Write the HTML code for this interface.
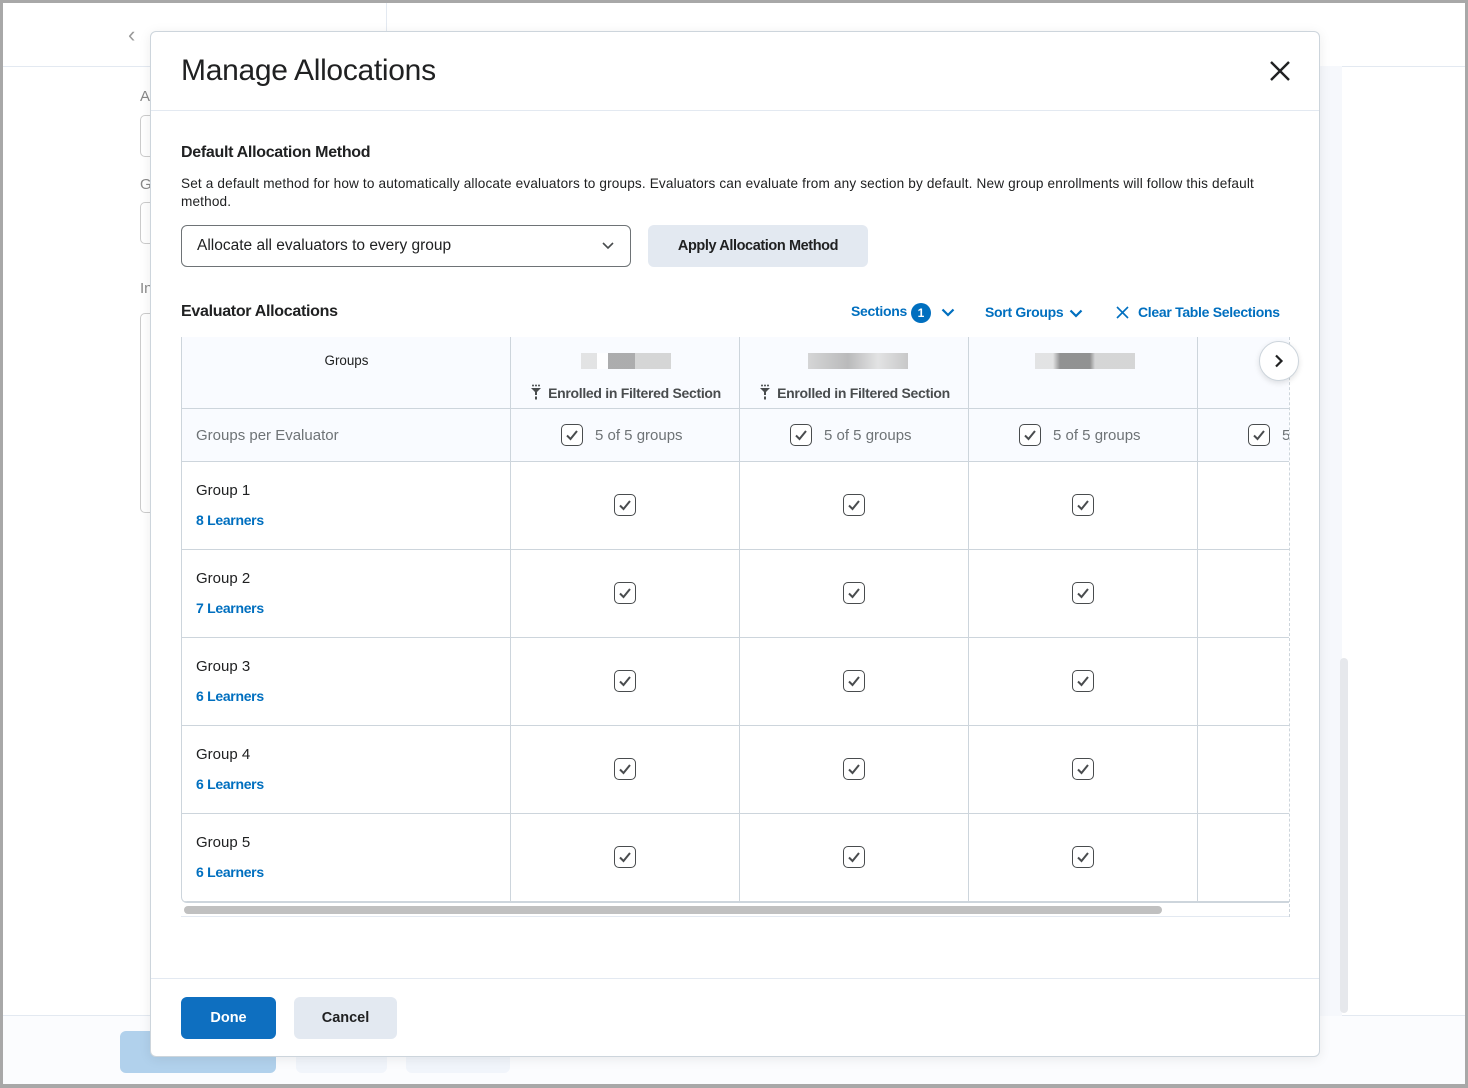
<!DOCTYPE html>
<html><head><style>
*{box-sizing:border-box;margin:0;padding:0}
body{width:1468px;height:1088px;position:relative;overflow:hidden;background:#fff;font-family:"Liberation Sans",sans-serif;color:#202122}
.frame{position:absolute;inset:0;border:3px solid #a8a8a8;border-bottom-width:4px;pointer-events:none;z-index:50}
.a{position:absolute;white-space:nowrap}
.modal{position:absolute;left:150px;top:31px;width:1170px;height:1026px;background:#fff;border:1px solid #cdd5dc;border-radius:6px;box-shadow:0 2px 12px rgba(0,0,0,.08)}
.blue{color:#006fbf}
.cell{position:absolute;border-right:1px solid #cdd5dc;border-bottom:1px solid #cdd5dc}
.cb{position:absolute;width:22px;height:22px;border:1.5px solid #494c4e;border-radius:5px;background:#fff}
.cb svg{position:absolute;left:3px;top:3px}
.lk{font-size:14px;font-weight:bold;letter-spacing:-0.3px}
</style></head><body>
<div class="a" style="left:0;top:66px;width:1468px;height:1px;background:#e3e9f1"></div>
<div class="a" style="left:386px;top:0;width:1px;height:66px;background:#e3e9f1"></div>
<div class="a" style="left:128px;top:22px;font-size:22px;color:#999">‹</div>
<div class="a" style="left:140px;top:88px;font-size:15px;color:#888">A</div>
<div class="a" style="left:140px;top:115px;width:20px;height:42px;border:1px solid #ccc;border-radius:5px"></div>
<div class="a" style="left:140px;top:176px;font-size:15px;color:#888">G</div>
<div class="a" style="left:140px;top:202px;width:20px;height:42px;border:1px solid #ccc;border-radius:5px"></div>
<div class="a" style="left:140px;top:280px;font-size:15px;color:#888">In</div>
<div class="a" style="left:140px;top:313px;width:20px;height:200px;border:1px solid #ccc;border-radius:5px"></div>
<div class="a" style="left:0;top:1015px;width:1468px;height:73px;background:#fbfcfe;border-top:1px solid #e3e9f1"></div>
<div class="a" style="left:120px;top:1031px;width:156px;height:42px;background:#b1d1ec;border-radius:6px"></div>
<div class="a" style="left:296px;top:1031px;width:91px;height:42px;background:#f1f5fb;border-radius:6px"></div>
<div class="a" style="left:406px;top:1031px;width:104px;height:42px;background:#f1f5fb;border-radius:6px"></div>
<div class="a" style="left:1320px;top:66px;width:22px;height:950px;background:#f6f8fc"></div>
<div class="a" style="left:1340px;top:658px;width:8px;height:355px;background:#e6e8ec;border-radius:4px"></div>

<div class="modal">
 <div class="a" style="left:30px;top:22px;font-size:30px;letter-spacing:-0.3px;color:#202122">Manage Allocations</div>
 <svg class="a" style="left:1118px;top:28px" width="22" height="22" viewBox="0 0 22 22"><path d="M2 2L20 20M20 2L2 20" stroke="#202122" stroke-width="2.4"/></svg>
 <div class="a" style="left:0;top:78px;width:1168px;height:1px;background:#e3e9f1"></div>
 <div class="a" style="left:30px;top:112px;font-size:16px;font-weight:bold;letter-spacing:-0.3px">Default Allocation Method</div>
 <div class="a" style="left:30px;top:143px;width:1112px;font-size:13.6px;line-height:18px;color:#202122;white-space:normal;letter-spacing:0.15px">Set a default method for how to automatically allocate evaluators to groups. Evaluators can evaluate from any section by default. New group enrollments will follow this default method.</div>
 <div class="a" style="left:30px;top:193px;width:450px;height:42px;border:1px solid #6e7376;border-radius:6px;font-size:15.5px;padding:11px 15px">Allocate all evaluators to every group
  <svg class="a" style="left:420px;top:16px" width="12" height="8" viewBox="0 0 12 8"><path d="M1 1l5 5 5-5" stroke="#494c4e" stroke-width="1.6" fill="none"/></svg></div>
 <div class="a" style="left:497px;top:193px;width:220px;height:42px;background:#e3e9f1;border-radius:6px;font-size:14.5px;font-weight:bold;letter-spacing:-0.4px;text-align:center;line-height:42px">Apply Allocation Method</div>
 <div class="a" style="left:30px;top:271px;font-size:16px;font-weight:bold;letter-spacing:-0.3px">Evaluator Allocations</div>
 <div class="a blue lk" style="left:700px;top:271px">Sections</div>
 <div class="a" style="left:760px;top:271px;width:20px;height:20px;border-radius:10px;background:#006fbf;color:#fff;font-size:12px;font-weight:bold;text-align:center;line-height:20px">1</div>
 <svg class="a" style="left:790px;top:276px" width="14" height="9" viewBox="0 0 14 9"><path d="M1.5 1.5l5.5 5.5 5.5-5.5" stroke="#006fbf" stroke-width="2.2" fill="none"/></svg>
 <div class="a blue lk" style="left:834px;top:272px">Sort Groups</div>
 <svg class="a" style="left:918px;top:277px" width="14" height="9" viewBox="0 0 14 9"><path d="M1.5 1.5l5.5 5.5 5.5-5.5" stroke="#006fbf" stroke-width="2.2" fill="none"/></svg>
 <svg class="a" style="left:965px;top:274px" width="13" height="13" viewBox="0 0 13 13"><path d="M1 1l11 11M12 1L1 12" stroke="#006fbf" stroke-width="1.6"/></svg>
 <div class="a blue lk" style="left:987px;top:272px">Clear Table Selections</div>

 <div class="a" style="left:30px;top:305px;width:1108px;height:566px;overflow:hidden;border-left:1px solid #cdd5dc;border-bottom:1px solid #cdd5dc;border-radius:0 0 0 6px">
  <div class="a" style="left:0;top:0;width:1108px;height:125px;background:#f9fbff"></div>
  <div id="t"></div>
 </div>
 <div class="a" style="left:1138px;top:305px;width:0;height:580px;border-left:1px dashed #cdd5dc"></div>
 <div class="a" style="left:1108px;top:309px;width:40px;height:40px;border-radius:20px;background:#fff;border:1px solid #cdd5dc;box-shadow:0 2px 6px rgba(0,0,0,.12)">
  <svg class="a" style="left:14px;top:12px" width="10" height="14" viewBox="0 0 10 14"><path d="M2 1.5l5.5 5.5L2 12.5" stroke="#202122" stroke-width="2.2" fill="none"/></svg></div>
 <div class="a" style="left:30px;top:871px;width:1108px;height:14px;border-bottom:1px solid #e3e9f1"></div>
 <div class="a" style="left:33px;top:874px;width:978px;height:8px;background:#c0c0c0;border-radius:4px"></div>

 <div class="a" style="left:0;top:946px;width:1168px;height:1px;background:#e3e9f1"></div>
 <div class="a" style="left:30px;top:965px;width:95px;height:42px;background:#0e6fc0;border-radius:6px;color:#fff;font-weight:bold;font-size:14.5px;text-align:center;line-height:42px">Done</div>
 <div class="a" style="left:143px;top:965px;width:103px;height:42px;background:#e3e9f1;border-radius:6px;font-weight:bold;font-size:14.5px;text-align:center;line-height:42px">Cancel</div>
</div>
<div class="frame"></div>
<script>
var t=document.getElementById('t'),h='';
var X=[0,329,558,787,1016],W=[329,229,229,229,229];
var ck='<svg width="14" height="14" viewBox="0 0 14 14"><path d="M2 7.5l3.5 3.5L12 3" stroke="#494c4e" stroke-width="2" fill="none"/></svg>';
var fil='<svg width="12" height="16" viewBox="0 0 12 16" style="vertical-align:-2px;margin-right:6px"><path d="M1 4h10L7 8v3H5V8z" fill="#494c4e"/><circle cx="3" cy="1.5" r="1" fill="#494c4e"/><circle cx="6" cy="1.5" r="1" fill="#494c4e"/><circle cx="9" cy="1.5" r="1" fill="#494c4e"/><rect x="5" y="12.5" width="2" height="3" fill="#494c4e"/></svg>';
for(var i=0;i<5;i++)h+='<div class="cell" style="left:'+X[i]+'px;top:0;width:'+W[i]+'px;height:72px"></div>';
h+='<div class="a" style="left:0;width:329px;top:16px;text-align:center;font-size:13.4px">Groups</div>';
var blur=['<div class="a" style="left:70px;top:16px;width:90px;height:16px;background:linear-gradient(90deg,#ddd 0 18%,#fff 18% 30%,#999 30% 60%,#ccc 60%);opacity:.8"></div>',
'<div class="a" style="left:68px;top:16px;width:100px;height:16px;background:linear-gradient(90deg,#ccc,#aaa 40%,#ddd 70%,#bbb);opacity:.8"></div>',
'<div class="a" style="left:66px;top:16px;width:100px;height:16px;background:linear-gradient(90deg,#ddd 0 18%,#777 25% 55%,#ccc 60%);opacity:.8"></div>'];
for(var i=1;i<4;i++){h+='<div class="a" style="left:'+X[i]+'px;top:0;width:229px;height:72px">'+blur[i-1];
 if(i<3)h+='<div class="a" style="left:0;width:229px;top:47px;text-align:center;font-size:14px;font-weight:bold;letter-spacing:-0.3px;color:#494c4e">'+fil+'Enrolled in Filtered Section</div>';
 h+='</div>';}
for(var i=0;i<5;i++)h+='<div class="cell" style="left:'+X[i]+'px;top:72px;width:'+W[i]+'px;height:53px"></div>';
h+='<div class="a" style="left:14px;top:90px;font-size:15px;color:#6e7376">Groups per Evaluator</div>';
for(var i=1;i<5;i++){h+='<div class="cb" style="left:'+(X[i]+50)+'px;top:87px">'+ck+'</div><div class="a" style="left:'+(X[i]+84)+'px;top:90px;font-size:15px;color:#6e7376">5 of 5 groups</div>';}
var L=[8,7,6,6,6];
for(var r=0;r<5;r++){var y=125+r*88;
 for(var i=0;i<5;i++)h+='<div class="cell" style="left:'+X[i]+'px;top:'+y+'px;width:'+W[i]+'px;height:88px"></div>';
 h+='<div class="a" style="left:14px;top:'+(y+20)+'px;font-size:15px">Group '+(r+1)+'</div>';
 h+='<div class="a blue" style="left:14px;top:'+(y+50)+'px;font-size:14px;font-weight:bold;letter-spacing:-0.3px">'+L[r]+' Learners</div>';
 for(var i=1;i<4;i++)h+='<div class="cb" style="left:'+(X[i]+103)+'px;top:'+(y+32)+'px">'+ck+'</div>';
}
t.innerHTML=h;
</script>
</body></html>
